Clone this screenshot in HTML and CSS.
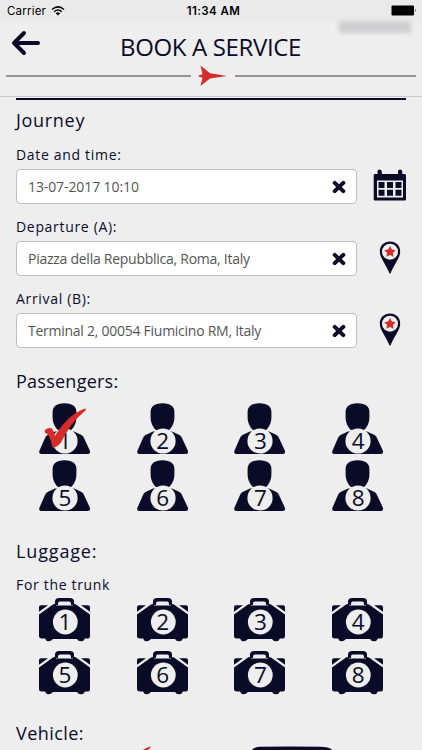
FILE: index.html
```html
<!DOCTYPE html>
<html lang="en">
<head>
  <meta charset="UTF-8" />
  <meta name="viewport" content="width=device-width, initial-scale=1.0" />
  <title>Book a service</title>
  <link rel="stylesheet" href="styles.css">
</head>
<body>
  <!-- shared icons -->
  <svg class="defs" width="0" height="0">
    <symbol id="person" viewBox="0 0 52 52">
      <path d="M25.500 0.300C34 0.300 37.400 4 37.400 9V14C37.400 20 35 24.500 32 27H19C16 24.500 13.600 20 13.600 14V9C13.600 4 17 0.300 25.500 0.300Z" />
      <path d="M16 28.500L8.500 32Q7 33 6 35L0.300 48Q-0.300 51 2 51H49Q51.500 51 51 48L45 35Q44 33 42.500 32L35 28.500Z" />
      <circle class="hole" cx="26" cy="38" r="12.600" />
    </symbol>
    <symbol id="suitcase" viewBox="0 0 52 44">
      <path d="M16 7V3Q16.500 0 20 0H31Q34.500 0 35 3V7H32V5.500Q32 3.600 30 3.600H21Q19 3.600 19 5.500V7Z" />
      <path d="M17 5.500V7.500H34V5.500L37 6.500L51 16.500V38Q51 40.500 49 40.500H46Q45 43.200 42 43.200Q39 43.200 38 41H14Q12 43.200 9.500 43.200Q7 43.200 6 40.500H3Q0 40.500 0 38V16.500L14 6.500Z" />
      <path d="M2 7.200H9L0 13.800V9.200Q0 7.200 2 7.200ZM49 7.200H42L51 13.800V9.200Q51 7.200 49 7.200Z" />
      <circle class="hole" cx="26.300" cy="24" r="12.400" />
    </symbol>
    <symbol id="pin" viewBox="0 0 22 34">
      <path d="M11 0.400C17 0.400 21.200 4.600 21.200 10.500C21.200 17 15 23.500 11.700 32Q11 33.500 10.300 32C7 23.500 0.800 17 0.800 10.500C0.800 4.600 5 0.400 11 0.400Z" />
      <circle class="hole" cx="11" cy="10.700" r="8" />
      <path class="red" d="M11 5L12.900 8.600L16.700 9.200L13.900 11.900L14.600 15.800L11 14L7.400 15.800L8.100 11.900L5.300 9.200L9.100 8.600Z" />
    </symbol>
    <symbol id="clear" viewBox="0 0 14 14">
      <path class="stroke" d="M2.700 2.900L11.300 11.100M11.300 2.900L2.700 11.100" stroke-width="4" />
    </symbol>
  </svg>

  <div class="statusbar">
    <div class="carrier">Carrier
      <svg width="14" height="10" viewBox="0 0 14 10">
        <path d="M1 3.500Q7 -1.700 13 3.500M3.200 5.700Q7 2.400 10.800 5.700" fill="none" stroke="#000" stroke-width="1.500" />
        <path d="M4.700 7.200Q7 5.400 9.300 7.200L7 9.600Z" fill="#000" />
      </svg>
    </div>
    <div class="clock">11:34 AM</div>
    <svg class="battery" width="26" height="11" viewBox="0 0 26 11">
      <rect x="0.500" y="0.500" width="22.500" height="10" rx="1" fill="#000" />
      <path d="M24 4Q25.500 5.500 24 7Z" fill="#000" />
    </svg>
  </div>

  <header>
    <div class="titlebar">
      <svg class="back" width="30" height="26" viewBox="0 0 30 26">
        <path class="stroke" d="M13 3L3 13L13 23M4 13H27" stroke-width="4" />
      </svg>
      <h1>BOOK A SERVICE</h1>
      <div class="user"></div>
    </div>
    <div class="divider">
      <span class="rule"></span>
      <svg width="30" height="22" viewBox="0 0 30 22">
        <path class="red" d="M2.500 0.500L12 8.300L20 9.600L29 11L20 12.200L12 13.600L2.500 21L4.500 12.800L0.500 11.500V10.500L4.500 9.200Z" />
      </svg>
      <span class="rule"></span>
    </div>
  </header>

  <main>
    <h2 class="journey-title">Journey</h2>

    <label>Date and time:</label>
    <div class="field">
      <div class="input"><span class="date">13-07-2017 10:10</span><svg width="14" height="14"><use href="#clear" /></svg></div>
      <svg class="calendar" width="34" height="34" viewBox="0 0 34 34">
        <path d="M1.500 5H4.500V2.500Q4.500 0.500 6.500 0.500T8.800 2.500V5H25V2.500Q25 0.500 27 0.500T29.300 2.500V5H32Q33 5 33 6.500V30Q33 31.500 32 31.500H2Q0.700 31.500 0.700 30V6.500Q0.700 5 1.500 5Z" />
        <rect class="hole" x="4" y="11.500" width="26" height="17" />
        <path d="M5.500 13h6v6h-6zM14 13h6v6h-6zM22.500 13h6v6h-6zM5.500 20.800h6v6h-6zM14 20.800h6v6h-6zM22.500 20.800h6v6h-6z" />
      </svg>
    </div>

    <label>Departure (A):</label>
    <div class="field">
      <div class="input"><span>Piazza della Repubblica, Roma, Italy</span><svg width="14" height="14"><use href="#clear" /></svg></div>
      <svg width="22" height="34"><use href="#pin" /></svg>
    </div>

    <label>Arrival (B):</label>
    <div class="field">
      <div class="input"><span>Terminal 2, 00054 Fiumicino RM, Italy</span><svg width="14" height="14"><use href="#clear" /></svg></div>
      <svg width="22" height="34"><use href="#pin" /></svg>
    </div>

    <h2 class="passengers-title">Passengers:</h2>
    <div class="grid passengers">
      <div class="item"><svg><use href="#person" /></svg><b>1</b>
        <svg class="check" viewBox="0 0 42 40">
          <path class="red" d="M0.500 22.500Q4 19 8 20.500Q10 23.500 11 28C18 16 28 5 41 0.500Q42.500 1 41 3C31 11 23 22 17 34.500Q12 40.500 8.500 39.500Q7 31 3.500 26Q0.500 25.500 0.500 22.500Z" />
        </svg>
      </div>
      <div class="item"><svg><use href="#person" /></svg><b>2</b></div>
      <div class="item"><svg><use href="#person" /></svg><b>3</b></div>
      <div class="item"><svg><use href="#person" /></svg><b>4</b></div>
      <div class="item"><svg><use href="#person" /></svg><b>5</b></div>
      <div class="item"><svg><use href="#person" /></svg><b>6</b></div>
      <div class="item"><svg><use href="#person" /></svg><b>7</b></div>
      <div class="item"><svg><use href="#person" /></svg><b>8</b></div>
    </div>

    <h2 class="luggage-title">Luggage:</h2>
    <label class="trunk">For the trunk</label>
    <div class="grid luggage">
      <div class="item"><svg><use href="#suitcase" /></svg><b>1</b></div>
      <div class="item"><svg><use href="#suitcase" /></svg><b>2</b></div>
      <div class="item"><svg><use href="#suitcase" /></svg><b>3</b></div>
      <div class="item"><svg><use href="#suitcase" /></svg><b>4</b></div>
      <div class="item"><svg><use href="#suitcase" /></svg><b>5</b></div>
      <div class="item"><svg><use href="#suitcase" /></svg><b>6</b></div>
      <div class="item"><svg><use href="#suitcase" /></svg><b>7</b></div>
      <div class="item"><svg><use href="#suitcase" /></svg><b>8</b></div>
    </div>

    <h2 class="vehicle-title">Vehicle:</h2>
    <div class="vehicles">
      <svg width="220" height="60" viewBox="0 0 220 60">
        <path class="red" d="M8 7Q13 2.500 19 0.500Q20.500 1.500 18 3Q15 5 12 9Z" />
        <path d="M119 8Q121 1 128 0.800Q160 0 190 0.800Q201 1 205 8V50H119Z" />
      </svg>
    </div>
  </main>
</body>
</html>
```
FILE: styles.css
```css
* {
  box-sizing: border-box;
}

html {
  overflow: hidden;
}

body {
  display: flex;
  flex-direction: column;
  margin: 0;
  height: 750px;
  overflow: hidden;
  background: #eeeeee;
  color: #0a0b2a;
  font-family: "Open Sans", "Noto Sans", sans-serif;
}

svg {
  display: block;
  flex: none;
  fill: #0a0b26;
}

.defs {
  position: absolute;
}

.hole {
  fill: #eeeeee;
}

.red {
  fill: #d62b2b;
}

.stroke {
  fill: none;
  stroke: #0a0b26;
  stroke-linecap: round;
  stroke-linejoin: round;
}

/* status bar */
.statusbar {
  display: grid;
  grid-template-columns: 1fr auto 1fr;
  align-items: center;
  flex: none;
  height: 21px;
  padding: 0 5px 0 7px;
  background: #eaeaea;
  color: #000;
  font-family: Inter, sans-serif;
  font-size: 11.5px;
}

.carrier {
  display: flex;
  align-items: center;
  gap: 5px;
  letter-spacing: 0.2px;
}

.clock {
  margin-left: 3px;
  font-weight: 600;
  letter-spacing: 0.4px;
}

.battery {
  justify-self: end;
}

/* header */
header {
  flex: none;
  height: 76px;
  border-bottom: 1px solid #c8c8c8;
}

.titlebar {
  position: relative;
  display: flex;
  height: 44px;
  padding-left: 11px;
}

.back {
  margin-top: 9px;
}

h1 {
  margin: 9px 0 0 79px;
  font-size: 24px;
  line-height: 34px;
  font-weight: 400;
  letter-spacing: -0.35px;
  white-space: nowrap;
}

.user {
  position: absolute;
  top: 0;
  right: 11px;
  width: 72px;
  height: 12px;
  background: #cdcdd2;
  filter: blur(2px);
}

.divider {
  display: flex;
  align-items: center;
  gap: 7px;
  padding: 0 6px;
}

.rule {
  flex: 1;
  height: 2px;
  background: #959393;
}

.rule:last-child {
  flex: none;
  width: 181px;
}

/* form */
main {
  flex: none;
  height: 652px;
  margin: 1px 16px 0;
  border-top: 2px solid #0a0b2a;
}

h2 {
  margin: 0;
  font-size: 18px;
  line-height: 26px;
  font-weight: 400;
  letter-spacing: 0.7px;
}

.journey-title {
  margin-top: 7px;
}

label {
  display: block;
  margin-top: 12px;
  font-size: 14px;
  line-height: 20px;
  font-weight: 500;
  letter-spacing: 0.68px;
}

.field + label {
  margin-top: 13px;
}

.field {
  display: flex;
  margin: 4px -17px 0 0;
  height: 35px;
}

.field > svg {
  margin: 0 auto;
}

.input {
  display: flex;
  align-items: center;
  justify-content: space-between;
  width: 341px;
  height: 35px;
  padding: 0 10px 0 11px;
  background: #fff;
  border: 1px solid #c0c0c0;
  border-radius: 4px;
  color: #555;
  font-size: 14px;
  letter-spacing: -0.26px;
}

.date {
  letter-spacing: -0.1px;
}

.grid {
  display: grid;
  grid-template-columns: repeat(4, 97.700px);
  padding-left: 23px;
}

.item {
  position: relative;
  width: 52px;
}

.item svg {
  width: 52px;
  height: 100%;
}

/* number printed over the icon */
.item b {
  position: absolute;
  left: 0;
  width: 52px;
  text-align: center;
  font-size: 22.500px;
  line-height: 24px;
  font-weight: 380;
}

.item .check {
  position: absolute;
  top: 5px;
  left: 5px;
  width: 42px;
  height: 40px;
}

.passengers-title {
  margin-top: 20px;
  letter-spacing: 0.25px;
}

.passengers {
  margin-top: 9px;
  grid-auto-rows: 52px;
  row-gap: 5px;
}

.passengers b {
  top: 26px;
}

.luggage-title {
  margin-top: 26px;
  letter-spacing: 0.85px;
}

.trunk {
  margin-top: 11px;
}

.luggage {
  margin-top: 3px;
  grid-auto-rows: 44px;
  row-gap: 9px;
}

.luggage b {
  top: 12px;
}

.vehicle-title {
  margin-top: 25px;
  letter-spacing: 0.45px;
}

/* only the top edge of the row shows above the fold */
.vehicles {
  height: 4px;
  padding-left: 115px;
  overflow: hidden;
}
```
